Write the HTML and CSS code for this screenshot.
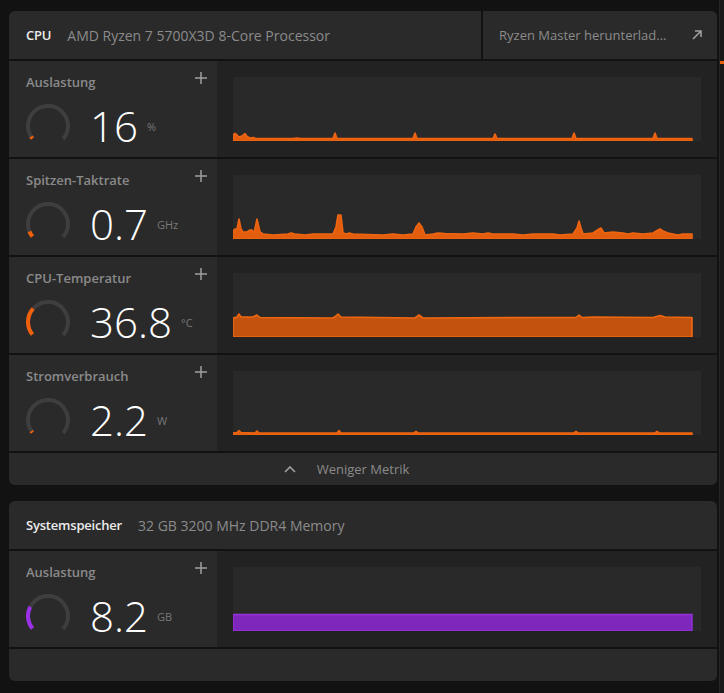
FILE: index.html
```html
<!DOCTYPE html>
<html lang="de">
<head>
<meta charset="utf-8">
<title>Leistung</title>
<link rel="stylesheet" href="styles.css">
</head>
<body>
<div class="screen">
  <main class="panels">

    <section class="card">
      <header class="card-head">
        <div class="head-title">
          <span class="head-name">CPU</span>
          <span class="head-desc">AMD Ryzen 7 5700X3D 8-Core Processor</span>
        </div>
        <div class="head-link">
          <span>Ryzen Master herunterlad...</span>
          <svg class="link-icon" viewBox="0 0 10 10"><path d="M1 9 L9 1 M3 1 H9 V7"/></svg>
        </div>
      </header>

      <div class="metric">
        <div class="metric-info">
          <div class="metric-top">
            <span class="metric-label">Auslastung</span>
            <svg class="add-icon" viewBox="0 0 12 12"><path d="M6 0 V12 M0 6 H12"/></svg>
          </div>
          <div class="metric-body">
            <svg class="gauge" viewBox="0 0 44 44">
              <circle class="gauge-track" cx="22" cy="22" r="20"/>
              <circle class="gauge-fill" cx="22" cy="22" r="20" stroke-dasharray="2.5 200"/>
            </svg>
            <span class="metric-value">16</span>
            <span class="metric-unit">%</span>
          </div>
        </div>
        <div class="metric-chart">
          <svg class="chart" viewBox="0 0 468 64" preserveAspectRatio="none">
            <path class="line-orange" d="M0,64 L0,58 L2,56.5 L4,58 L6,60 L9,59 L12,56.5 L14,59.5 L17,61 L20,60.5 L23,61.5 L60,61.5 L64,61 L68,61.5 L100,61.5 L102,56 L104,61.5 L180,61.5 L182,56 L184,61.5 L260,61.5 L262,57 L264,61.5 L339,61.5 L341,56 L343,61.5 L420,61.5 L422,56 L424,61.5 L459,61.5 L459,64 Z"/>
          </svg>
        </div>
      </div>

      <div class="metric">
        <div class="metric-info">
          <div class="metric-top">
            <span class="metric-label">Spitzen-Taktrate</span>
            <svg class="add-icon" viewBox="0 0 12 12"><path d="M6 0 V12 M0 6 H12"/></svg>
          </div>
          <div class="metric-body">
            <svg class="gauge" viewBox="0 0 44 44">
              <circle class="gauge-track" cx="22" cy="22" r="20"/>
              <circle class="gauge-fill" cx="22" cy="22" r="20" stroke-dasharray="6 200"/>
            </svg>
            <span class="metric-value">0.7</span>
            <span class="metric-unit">GHz</span>
          </div>
        </div>
        <div class="metric-chart">
          <svg class="chart" viewBox="0 0 468 64" preserveAspectRatio="none">
            <path class="line-orange" d="M0,64 L0,56 L2,54 L4,54 L6,44 L8,54 L10,57 L14,57 L17,55 L19,55 L21,58 L24,44 L27,57 L30,59 L40,60 L55,59 L58,58 L62,59 L72,60 L80,59 L90,59 L100,59 L103,52 L105,40 L108,40 L110,58 L114,59 L116,58 L120,59 L150,60 L160,59 L170,60 L180,59 L183,52 L186,48 L189,52 L192,60 L200,59 L205,58 L212,58.5 L230,59 L240,58 L250,59 L255,58 L260,59 L280,59 L290,60 L300,59 L320,59 L327,60 L340,59 L344,53 L346,46 L348,53 L350,59 L360,58 L366,54 L368,53 L371,58 L380,57 L390,58 L395,59 L400,58 L410,59 L420,58 L425,55 L427,54 L430,56 L435,58 L445,60 L450,59 L459,59 L459,64 Z"/>
          </svg>
        </div>
      </div>

      <div class="metric">
        <div class="metric-info">
          <div class="metric-top">
            <span class="metric-label">CPU-Temperatur</span>
            <svg class="add-icon" viewBox="0 0 12 12"><path d="M6 0 V12 M0 6 H12"/></svg>
          </div>
          <div class="metric-body">
            <svg class="gauge" viewBox="0 0 44 44">
              <circle class="gauge-track" cx="22" cy="22" r="20"/>
              <circle class="gauge-fill" cx="22" cy="22" r="20" stroke-dasharray="28 200"/>
            </svg>
            <span class="metric-value">36.8</span>
            <span class="metric-unit">°C</span>
          </div>
        </div>
        <div class="metric-chart">
          <svg class="chart" viewBox="0 0 468 64" preserveAspectRatio="none">
            <path class="area-orange" d="M0,64 L0,45 L4,44 L6,41 L8,44 L20,44 L24,42 L27,44.5 L100,45 L103,43 L105,41 L108,44 L182,45 L186,42 L190,45 L300,44.5 L343,44.5 L346,42 L349,44.5 L360,44 L420,44.5 L427,42.5 L432,44 L459,44.5 L459,64 Z"/>
          </svg>
        </div>
      </div>

      <div class="metric">
        <div class="metric-info">
          <div class="metric-top">
            <span class="metric-label">Stromverbrauch</span>
            <svg class="add-icon" viewBox="0 0 12 12"><path d="M6 0 V12 M0 6 H12"/></svg>
          </div>
          <div class="metric-body">
            <svg class="gauge" viewBox="0 0 44 44">
              <circle class="gauge-track" cx="22" cy="22" r="20"/>
              <circle class="gauge-fill" cx="22" cy="22" r="20" stroke-dasharray="2 200"/>
            </svg>
            <span class="metric-value">2.2</span>
            <span class="metric-unit">W</span>
          </div>
        </div>
        <div class="metric-chart">
          <svg class="chart" viewBox="0 0 468 64" preserveAspectRatio="none">
            <path class="line-orange" d="M0,64 L0,62 L4,61.5 L6,59.5 L8,61.5 L22,62 L24,60 L26,62 L104,62 L106,59.5 L108,62 L181,62 L183,60.5 L185,62 L341,62 L343,60.5 L345,62 L422,62 L424,60.5 L426,62 L459,62 L459,64 Z"/>
          </svg>
        </div>
      </div>

      <div class="card-foot">
        <svg class="foot-chev" viewBox="0 0 12 7"><path d="M1 6 L6 1 L11 6"/></svg>
        <span>Weniger Metrik</span>
      </div>
    </section>

    <section class="card">
      <header class="card-head">
        <div class="head-title">
          <span class="head-name">Systemspeicher</span>
          <span class="head-desc">32 GB 3200 MHz DDR4 Memory</span>
        </div>
      </header>

      <div class="metric">
        <div class="metric-info">
          <div class="metric-top">
            <span class="metric-label">Auslastung</span>
            <svg class="add-icon" viewBox="0 0 12 12"><path d="M6 0 V12 M0 6 H12"/></svg>
          </div>
          <div class="metric-body">
            <svg class="gauge" viewBox="0 0 44 44">
              <circle class="gauge-track" cx="22" cy="22" r="20"/>
              <circle class="gauge-fill purple" cx="22" cy="22" r="20" stroke-dasharray="23 200"/>
            </svg>
            <span class="metric-value">8.2</span>
            <span class="metric-unit">GB</span>
          </div>
        </div>
        <div class="metric-chart">
          <svg class="chart" viewBox="0 0 468 64" preserveAspectRatio="none">
            <path class="area-purple" d="M0,64 L0,47.5 L459,47.5 L459,64 Z"/>
          </svg>
        </div>
      </div>

      <div class="card-foot empty"></div>
    </section>

  </main>
  <div class="edge"><span class="edge-mark"></span></div>
</div>
</body>
</html>
```
FILE: styles.css
```css
* {
  box-sizing: border-box;
  margin: 0;
  padding: 0;
}

body {
  width: 724px;
  height: 693px;
  overflow: hidden;
  background: #121212;
  font-family: "Open Sans", "Noto Sans", sans-serif;
  font-size: 13px;
}

.screen {
  display: flex;
  height: 693px;
}

.panels {
  width: 708px;
  margin-left: 9px;
  padding-top: 11px;
  display: flex;
  flex-direction: column;
  gap: 16px;
}

/* card: header, metric rows and footer separated by thin dark gaps */
.card {
  display: flex;
  flex-direction: column;
  gap: 2px;
  border-radius: 6px;
  overflow: hidden;
}

.card-head {
  display: flex;
  gap: 2px;
  height: 48px;
}

.head-title {
  flex: 1;
  display: flex;
  align-items: center;
  gap: 16px;
  padding-left: 17px;
  background: #2a2a2a;
}

.head-name {
  color: #ececec;
  font-weight: 600;
  letter-spacing: -0.2px;
}

.head-desc {
  color: #8b8b8b;
  font-size: 14px;
}

.head-link {
  width: 234px;
  display: flex;
  align-items: center;
  justify-content: space-between;
  padding: 0 15px 0 16px;
  background: #2a2a2a;
  color: #8b8b8b;
}

.link-icon {
  width: 10px;
  height: 10px;
  fill: none;
  stroke: #a0a0a0;
  stroke-width: 1.6;
}

/* metric row */
.metric {
  display: flex;
  height: 96px;
}

.metric-info {
  width: 208px;
  padding: 12px 10px 0 17px;
  background: #2a2a2a;
}

.metric-top {
  display: flex;
  align-items: center;
  justify-content: space-between;
  height: 18px;
}

.metric-label {
  color: #8a8a8a;
  font-weight: 600;
}

.add-icon {
  width: 12px;
  height: 12px;
  margin-top: -8px;
  fill: none;
  stroke: #a0a0a0;
  stroke-width: 1.5;
}

.metric-body {
  display: flex;
  align-items: center;
  height: 44px;
  margin-top: 13px;
}

.gauge {
  width: 44px;
  height: 44px;
  flex: none;
}

.gauge circle {
  fill: none;
  stroke-width: 4;
  transform: rotate(141deg);
  transform-origin: 22px 22px;
}

.gauge-track {
  stroke: #3e3e3e;
  stroke-dasharray: 90 200;
}

.gauge-fill {
  stroke: #f0600a;
}

.gauge-fill.purple {
  stroke: #9b30e8;
}

.metric-value {
  margin-left: 20px;
  color: #ffffff;
  font-size: 42px;
  font-weight: 300;
  line-height: 44px;
}

.metric-unit {
  margin-left: 9px;
  color: #787878;
  font-size: 11px;
}

.metric-chart {
  flex: 1;
  padding: 16px;
  background: #222222;
}

.chart {
  display: block;
  width: 100%;
  height: 64px;
  background: #292929;
}

.line-orange {
  fill: #e25e0e;
  stroke: #ee6410;
  stroke-width: 1.6;
  stroke-linejoin: round;
}

.area-orange {
  fill: #c3520f;
  stroke: #ee6812;
  stroke-width: 1.6;
  stroke-linejoin: round;
}

.area-purple {
  fill: #7e27bd;
  stroke: #9632dc;
  stroke-width: 1.4;
}

/* footer toggle */
.card-foot {
  height: 32px;
  display: grid;
  grid-template-columns: 1fr auto 1fr;
  align-items: center;
  background: #2a2a2a;
  color: #8b8b8b;
}

.foot-chev {
  justify-self: end;
  width: 12px;
  height: 7px;
  margin-right: 21px;
  fill: none;
  stroke: #a0a0a0;
  stroke-width: 1.6;
}

/* neighbouring panel edge */
.edge {
  width: 5px;
  margin-left: 2px;
  padding-top: 61px;
  background: #191919;
  border-left: 1px solid #252525;
}

.edge-mark {
  display: block;
  height: 3px;
  background: #e8600c;
}
```
